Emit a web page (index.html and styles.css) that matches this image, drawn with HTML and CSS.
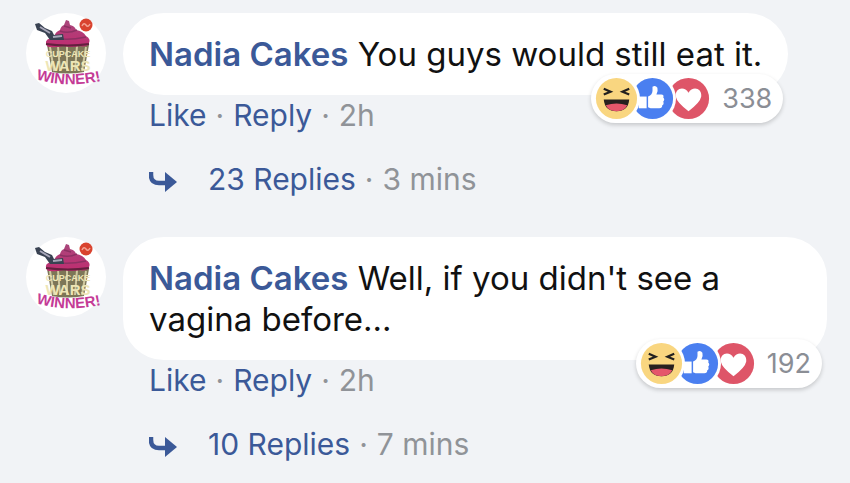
FILE: index.html
```html
<!DOCTYPE html>
<html lang="en">
<head>
<meta charset="utf-8">
<meta name="viewport" content="width=device-width, initial-scale=1">
<title>Comments</title>
<link rel="stylesheet" href="styles.css">
</head>
<body>
<svg class="sprite" aria-hidden="true">
  <defs>
    <path id="winner-arc" d="M10 66Q42 76 79 67"/>
    <linearGradient id="frosting" x1="0" y1="0" x2="0" y2="1">
      <stop offset="0" stop-color="#a9487c"/><stop offset="1" stop-color="#c02c70"/>
    </linearGradient>
    <symbol id="cupcake" viewBox="0 0 80 80">
      <circle cx="40" cy="40" r="40" fill="#fff"/>
      <path d="M21 32H63L58 59Q41 62 26 59Z" fill="#7d7657"/>
      <path d="M24 34L28 58M60 34L56 58M32 33L34 58M51 33L49 58M41 33V58" stroke="#cfc8a0" stroke-width="2"/>
      <path d="M20 30Q19 26 28 24Q29 19 34 17Q35 13 38 12L40 7L43 8L44 12Q49 13 50 17Q57 18 60 23Q65 26 63 30Q61 35 54 33Q45 35 38 33Q29 35 24 34Q20 34 20 30Z" fill="url(#frosting)"/>
      <path d="M34 18Q42 21 51 17M29 25Q41 28 60 24M38 13L45 15" fill="none" stroke="#8c3163" stroke-width="1.5"/>
      <path d="M20 31Q42 34 63 31" fill="none" stroke="#64203f" stroke-width="2"/>
      <path d="M9 11L13 10L19 15L26 18L28 22L37 21L38 27L24 27L19 20L11 17Z" fill="#394252"/>
      <path d="M14 14L24 20M27 24L36 23" stroke="#a8a7b9" stroke-width="2"/>
      <circle cx="60" cy="12" r="6.500" fill="#d9432f"/>
      <path d="M56 13Q58 9 60 12T64 11" fill="none" stroke="#f3a293" stroke-width="1.5"/>
      <text class="logo-name" x="42" y="44" text-anchor="middle" font-size="9">CUPCAKE</text>
      <text class="logo-name" x="42" y="58" text-anchor="middle" font-size="15">WARS</text>
      <text class="logo-winner" font-size="15"><textPath href="#winner-arc">WINNER!</textPath></text>
    </symbol>
    <symbol id="haha" viewBox="0 0 48 48">
      <circle cx="24" cy="24" r="24" fill="#fff"/>
      <circle cx="24" cy="24" r="21" fill="#f9d680"/>
      <path d="M11 14L18 17L11 20M37 14L30 17L37 20" fill="none" stroke="#22201f" stroke-width="2.200"/>
      <path d="M11 25H37Q36 37 24 37T11 25Z" fill="#27201f"/>
      <path d="M13 31Q24 27 35 31Q32 37 24 37T13 31Z" fill="#e5566b"/>
    </symbol>
    <symbol id="thumb" viewBox="0 0 48 48">
      <circle cx="24" cy="24" r="24" fill="#fff"/>
      <circle cx="24" cy="24" r="21" fill="#4a7ff0"/>
      <path d="M10 22H18V34H10Z" fill="#fff"/>
      <path d="M19.500 22Q24 20 24 16V12Q27 10 29 13Q30 17 28 20H33Q36 20 35 23Q37 25 35 27Q36 30 34 31Q34 34 31 34H22L19.500 33Z" fill="#fff"/>
    </symbol>
    <symbol id="heart" viewBox="0 0 48 48">
      <circle cx="24" cy="24" r="24" fill="#fff"/>
      <circle cx="24" cy="24" r="21" fill="#de5568"/>
      <path d="M24 37Q12 28 11 22C10 13 20 11 24 18C28 11 38 13 37 22Q36 28 24 37Z" fill="#fff"/>
    </symbol>
    <symbol id="branch" viewBox="0 0 28 20">
      <path d="M2 0V3Q2 11 10 11H17" fill="none" stroke="#3b5998" stroke-width="4.500"/>
      <path d="M16 0L28 10L16 20Z" fill="#3b5998"/>
    </symbol>
  </defs>
</svg>

<main class="thread">
  <article class="comment">
    <svg class="avatar" role="img" aria-label="Nadia Cakes"><use href="#cupcake"/></svg>
    <div class="content">
      <div class="bubble">
        <p class="message"><a class="author" href="#">Nadia Cakes</a> You guys would still eat it.</p>
        <button class="reactions" type="button">
          <svg class="reaction"><use href="#haha"/></svg>
          <svg class="reaction"><use href="#thumb"/></svg>
          <svg class="reaction"><use href="#heart"/></svg>
          <span class="count">338</span>
        </button>
      </div>
      <div class="actions"><a href="#">Like</a><span>·</span><a href="#">Reply</a><span>·</span><time>2h</time></div>
      <div class="replies"><svg class="branch" aria-hidden="true"><use href="#branch"/></svg><a href="#">23 Replies</a><span>·</span><time>3 mins</time></div>
    </div>
  </article>

  <article class="comment">
    <svg class="avatar" role="img" aria-label="Nadia Cakes"><use href="#cupcake"/></svg>
    <div class="content">
      <div class="bubble">
        <p class="message"><a class="author" href="#">Nadia Cakes</a> Well, if you didn't see a vagina before...</p>
        <button class="reactions" type="button">
          <svg class="reaction"><use href="#haha"/></svg>
          <svg class="reaction"><use href="#thumb"/></svg>
          <svg class="reaction"><use href="#heart"/></svg>
          <span class="count">192</span>
        </button>
      </div>
      <div class="actions"><a href="#">Like</a><span>·</span><a href="#">Reply</a><span>·</span><time>2h</time></div>
      <div class="replies"><svg class="branch" aria-hidden="true"><use href="#branch"/></svg><a href="#">10 Replies</a><span>·</span><time>7 mins</time></div>
    </div>
  </article>
</main>
</body>
</html>
```
FILE: styles.css
```css
* { box-sizing: border-box; }

body {
  margin: 0;
  background: #f1f3f6;
  color: #1d2129;
  font: 30px/40px Inter, "Liberation Sans", sans-serif;
}

a { color: #3b5998; text-decoration: none; }

.sprite { position: absolute; width: 0; height: 0; }

.logo-name {
  font-family: "Liberation Sans", sans-serif;
  font-weight: 700;
  fill: #eee6b6;
}

.logo-winner {
  font-family: "Liberation Sans", sans-serif;
  font-weight: 700;
  fill: #c43b96;
}

.thread {
  display: flex;
  flex-direction: column;
  gap: 38px;
  padding: 13px 23px 0 26px;
}

.comment { display: flex; gap: 17px; }

.avatar { flex: none; width: 80px; height: 80px; }

.content { flex: 1; min-width: 0; }

.bubble {
  position: relative;
  width: fit-content;
  padding: 21px 26px 20px;
  border-radius: 41px;
  background: #fff;
}

.message {
  margin: 0;
  color: #111;
  font-size: 33px;
  line-height: 41px;
}

.author { font-weight: 600; }

.reactions {
  position: absolute;
  right: 5px;
  bottom: -28px;
  display: flex;
  align-items: center;
  height: 49px;
  padding: 0 11px 0 2px;
  border: 0;
  border-radius: 25px;
  background: #fff;
  box-shadow: 0 2px 4px rgba(0, 0, 0, 0.18);
  color: #8b8e95;
  font: 27px/40px Inter, "Liberation Sans", sans-serif;
}

.reaction {
  position: relative;
  width: 47px;
  height: 47px;
  margin-right: -11px;
}

.reaction:nth-child(1) { z-index: 3; }
.reaction:nth-child(2) { z-index: 2; }
.reaction:nth-child(3) { z-index: 1; }

.count { margin-left: 21px; }

.actions,
.replies {
  display: flex;
  align-items: center;
  gap: 9px;
  padding-left: 26px;
  color: #909398;
}

.replies { margin-top: 24px; }

.branch { width: 28px; height: 20px; margin: 5px 22px 0 0; }
```
